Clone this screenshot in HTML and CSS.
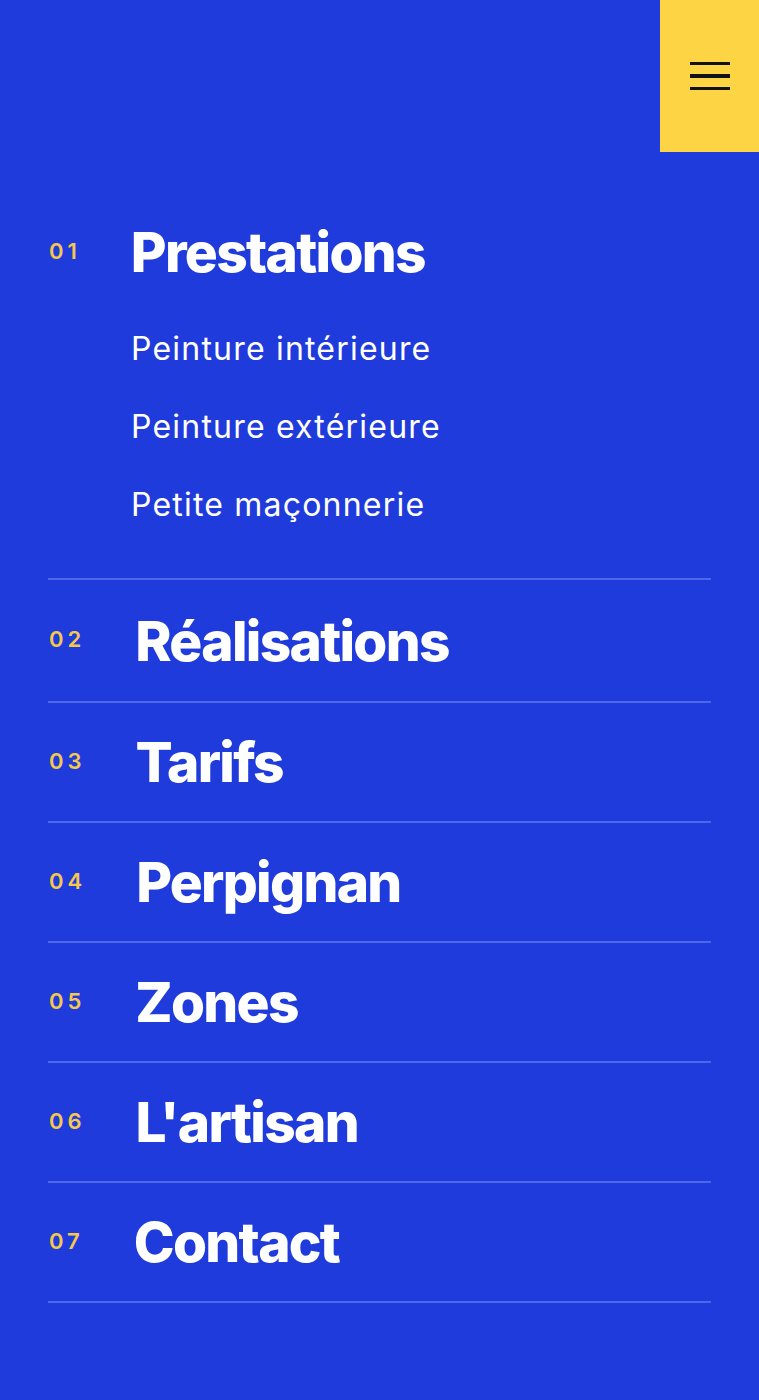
FILE: index.html
```html
<!DOCTYPE html>
<html lang="fr">
<head>
<meta charset="utf-8">
<title>Menu</title>
<link rel="stylesheet" href="styles.css">
</head>
<body>
<header class="top">
  <button class="menu-btn" aria-label="Menu">
    <span class="bar"></span><span class="bar"></span><span class="bar"></span>
  </button>
</header>
<nav class="nav">
  <ul class="nav-list">
    <li class="item item-open">
      <div class="row-head">
        <span class="num">01</span>
        <a class="title" href="#">Prestations</a>
      </div>
      <ul class="sub">
        <li><a href="#">Peinture intérieure</a></li>
        <li><a href="#">Peinture extérieure</a></li>
        <li><a href="#">Petite maçonnerie</a></li>
      </ul>
    </li>
    <li class="item item-second"><span class="num">02</span><a class="title" href="#">Réalisations</a></li>
    <li class="item"><span class="num">03</span><a class="title" href="#">Tarifs</a></li>
    <li class="item"><span class="num">04</span><a class="title" href="#">Perpignan</a></li>
    <li class="item"><span class="num">05</span><a class="title" href="#">Zones</a></li>
    <li class="item"><span class="num">06</span><a class="title" href="#">L'artisan</a></li>
    <li class="item"><span class="num">07</span><a class="title" href="#">Contact</a></li>
  </ul>
</nav>
</body>
</html>
```
FILE: styles.css
```css
html, body {
  margin: 0;
  padding: 0;
}
body {
  background: #1f3bdb;
  font-family: Inter, "Noto Sans", sans-serif;
  color: #ffffff;
  min-height: 1400px;
}
.top {
  display: flex;
  justify-content: flex-end;
}
.menu-btn {
  width: 99px;
  height: 152px;
  background: #fdd444;
  border: 0;
  padding: 0;
  display: flex;
  flex-direction: column;
  align-items: center;
  justify-content: center;
  gap: 9px;
}
.bar {
  display: block;
  width: 40px;
  height: 3.5px;
  background: #111111;
}
.nav {
  padding: 0 48px;
}
.nav-list, .sub {
  list-style: none;
  margin: 0;
  padding: 0;
}
.item {
  display: flex;
  align-items: center;
  gap: 50px;
  height: 118px;
  border-bottom: 2px solid #4d68ea;
}
.item-second {
  height: 121px;
}
.item-open {
  display: block;
  height: auto;
  padding-top: 70px;
  padding-bottom: 35px;
}
.row-head {
  display: flex;
  align-items: center;
  gap: 50px;
  height: 60px;
}
.num {
  color: #f5c84c;
  font-size: 22px;
  font-weight: 600;
  letter-spacing: 4px;
  padding-left: 1px;
  margin-top: -3px;
}
.title {
  color: #ffffff;
  text-decoration: none;
  font-size: 55px;
  font-weight: 800;
  letter-spacing: -1.7px;
  line-height: 60px;
}
.sub {
  margin-top: 27px;
  padding-left: 83px;
}
.sub li {
  height: 78px;
  display: flex;
  align-items: center;
}
.sub a {
  color: #ffffff;
  text-decoration: none;
  font-size: 32px;
  font-weight: 400;
  letter-spacing: 1.2px;
}
```
